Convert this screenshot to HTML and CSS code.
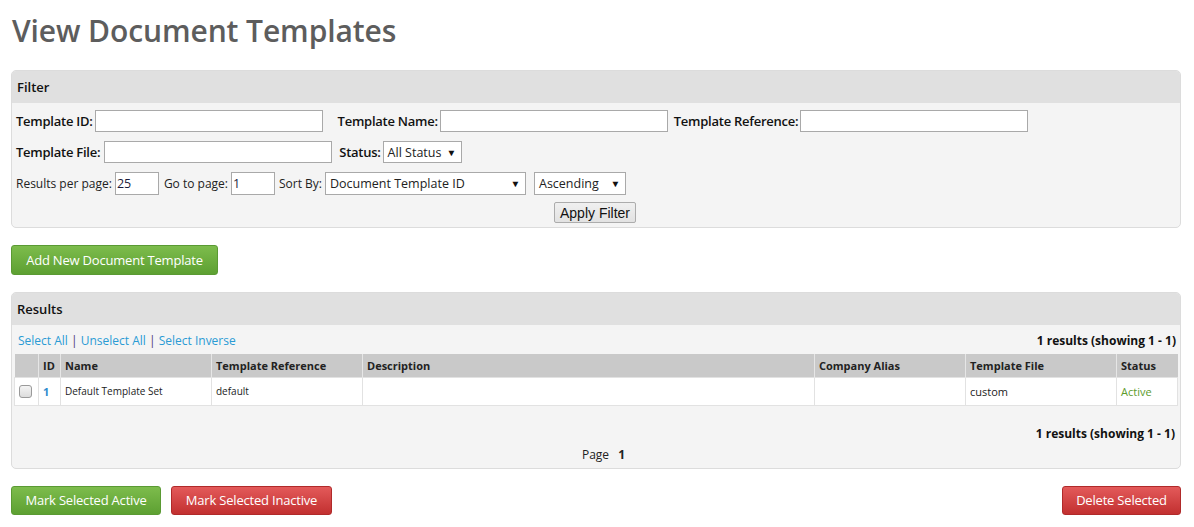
FILE: index.html
```html
<!DOCTYPE html>
<html>
<head>
<meta charset="utf-8">
<title>View Document Templates</title>
<link rel="stylesheet" href="styles.css">
</head>
<body>
<div class="page">
  <h1 class="title">View Document Templates</h1>

  <div class="panel filter">
    <div class="panel-head">Filter</div>
    <div class="panel-body">
      <div class="frow">
        <label class="blabel">Template ID:</label><span class="input w228"></span>
        <label class="blabel gap">Template Name:</label><span class="input w228"></span>
        <label class="blabel gap6">Template Reference:</label><span class="input w228"></span>
      </div>
      <div class="frow">
        <label class="blabel wide">Template File:</label><span class="input w228"></span>
        <label class="blabel gap7">Status:</label><span class="select w79"><span>All Status</span><span class="arrow">▼</span></span>
      </div>
      <div class="frow small">
        <label class="slabel">Results per page:</label><span class="input w44">25</span>
        <label class="slabel gap5">Go to page:</label><span class="input w44">1</span>
        <label class="slabel gap4">Sort By:</label><span class="select w201"><span>Document Template ID</span><span class="arrow">▼</span></span>
        <span class="select w92 gap8"><span>Ascending</span><span class="arrow">▼</span></span>
      </div>
      <div class="btnrow"><button class="apply">Apply Filter</button></div>
    </div>
  </div>

  <button class="btn green add">Add New Document Template</button>

  <div class="panel results">
    <div class="panel-head">Results</div>
    <div class="panel-body">
      <div class="toolbar">
        <div class="links"><a>Select All</a> <span class="sep">|</span> <a>Unselect All</a> <span class="sep">|</span> <a>Select Inverse</a></div>
        <div class="count">1 results (showing 1 - 1)</div>
      </div>
      <table class="grid">
        <colgroup>
          <col style="width:24px"><col style="width:22px"><col style="width:151px"><col style="width:151px"><col style="width:452px"><col style="width:151px"><col style="width:151px"><col style="width:61px">
        </colgroup>
        <thead>
          <tr><th></th><th>ID</th><th>Name</th><th>Template Reference</th><th>Description</th><th>Company Alias</th><th>Template File</th><th>Status</th></tr>
        </thead>
        <tbody>
          <tr>
            <td class="cb"><span class="check"></span></td>
            <td class="id"><a>1</a></td>
            <td class="tiny">Default Template Set</td>
            <td class="tiny">default</td>
            <td></td>
            <td></td>
            <td>custom</td>
            <td class="active">Active</td>
          </tr>
        </tbody>
      </table>
      <div class="count bottom">1 results (showing 1 - 1)</div>
      <div class="pager">Page <b>1</b></div>
    </div>
  </div>

  <div class="actions">
    <div class="left">
      <button class="btn green act w150">Mark Selected Active</button>
      <button class="btn red act w161">Mark Selected Inactive</button>
    </div>
    <button class="btn red act w119">Delete Selected</button>
  </div>
</div>
</body>
</html>
```
FILE: styles.css
```css
* { box-sizing: border-box; }
body {
  margin: 0;
  font-family: "Open Sans", "Liberation Sans", sans-serif;
  color: #222;
  background: #fff;
}
.page {
  width: 1192px;
  padding: 0 11px;
}
.title {
  font-size: 30px;
  font-weight: 600;
  color: #5d5d5d;
  line-height: 40px;
  margin: 11px 0 19px 1px;
  letter-spacing: -0.1px;
}
.panel {
  border: 1px solid #dcdcdc;
  border-radius: 5px;
  background: #f4f4f4;
  width: 1170px;
}
.panel-head {
  background: #e0e0e0;
  height: 32px;
  line-height: 32px;
  padding-left: 5px;
  font-size: 13px;
  font-weight: 600;
  color: #111;
  border-radius: 4px 4px 0 0;
}
.filter .panel-body {
  padding: 7px 4px 4px 4px;
}
.frow {
  display: flex;
  align-items: center;
  height: 22px;
  margin-bottom: 9px;
}
.frow.small {
  height: 23px;
  margin-bottom: 7px;
}
.blabel {
  font-size: 13px;
  font-weight: 600;
  color: #111;
  margin-right: 2px;
  letter-spacing: -0.25px;
}
.blabel.wide { margin-right: 4px; }
.slabel {
  font-size: 12px;
  color: #222;
  margin-right: 3px;
}
.gap { margin-left: 15px; }
.gap6 { margin-left: 6px; }
.gap7 { margin-left: 7px; }
.gap5 { margin-left: 5px; }
.gap4 { margin-left: 4px; }
.gap8 { margin-left: 8px; }
.input {
  display: inline-block;
  height: 22px;
  border: 1px solid #a9a9a9;
  background: #fff;
  font-size: 12.5px;
  line-height: 20px;
  padding-left: 1px;
  color: #1a1a3a;
}
.frow.small .input { height: 23px; line-height: 21px; }
.w228 { width: 228px; }
.w44 { width: 44px; }
.select {
  display: inline-flex;
  align-items: center;
  justify-content: space-between;
  height: 22px;
  border: 1px solid #a9a9a9;
  background: #fff;
  font-size: 12.5px;
  color: #222;
  padding: 0 5px 0 4px;
}
.frow.small .select { height: 23px; }
.select .arrow {
  font-size: 9px;
  color: #111;
  transform: scaleX(1.1);
}
.w79 { width: 79px; }
.w201 { width: 201px; }
.w92 { width: 92px; }
.btnrow {
  display: flex;
  justify-content: center;
}
.apply {
  font-family: "Liberation Sans", Arial, sans-serif;
  font-size: 14px;
  height: 21px;
  width: 82px;
  padding: 0;
  border: 1px solid #acacac;
  border-radius: 2px;
  background: linear-gradient(#f0f0f0, #e2e2e2);
  color: #111;
  margin-left: -2px;
}
.btn {
  font-family: "Open Sans", "Liberation Sans", sans-serif;
  font-size: 13px;
  letter-spacing: -0.2px;
  color: #fff;
  border-radius: 3px;
  padding: 0;
  text-align: center;
  white-space: nowrap;
  cursor: pointer;
}
.green {
  background: linear-gradient(#7dbc4c, #5da032);
  border: 1px solid #5a9a33;
}
.red {
  background: linear-gradient(#e35a5a, #c23030);
  border: 1px solid #b02a2a;
}
.add {
  display: block;
  height: 30px;
  width: 207px;
  margin: 17px 0 17px 0;
}
.results .panel-body {
  padding: 6px 3px 4px 2px;
}
.toolbar {
  display: flex;
  justify-content: space-between;
  align-items: center;
  height: 18px;
  margin-bottom: 5px;
  padding: 0 0 0 4px;
}
.links {
  font-size: 12px;
  color: #2a9bd4;
}
.links a { color: #2a9bd4; }
.links .sep { color: #4a3a7a; }
.count {
  font-size: 12px;
  font-weight: 700;
  color: #111;
  padding-right: 1px;
}
.grid {
  border-collapse: collapse;
  table-layout: fixed;
  width: 1163px;
}
.grid th {
  background: #c9c9c9;
  height: 23px;
  text-align: left;
  font-size: 11px;
  font-weight: 700;
  color: #222;
  padding: 0 4px;
  border-left: 1px solid #e6e6e6;
  white-space: nowrap;
}
.grid th:first-child { border-left: none; }
.grid td {
  background: #fff;
  height: 28px;
  font-size: 11px;
  padding: 0 4px;
  border: 1px solid #e2e2e2;
  color: #222;
  white-space: nowrap;
}
.grid td.tiny { font-size: 10px; }
.grid td.cb { padding: 0 0 0 4px; }
.check {
  display: block;
  width: 13px;
  height: 13px;
  border: 1px solid #9a9a9a;
  border-radius: 3px;
  background: linear-gradient(#f4f4f4, #dcdcdc);
}
.grid td.id a {
  color: #2f8ccd;
  font-weight: 700;
}
.grid td.active { color: #5c9b2c; }
.count.bottom {
  text-align: right;
  margin-top: 19px;
  line-height: 18px;
  padding-right: 2px;
}
.pager {
  text-align: center;
  font-size: 12px;
  line-height: 18px;
  margin-top: 3px;
  padding-left: 16px;
}
.pager b { margin-left: 6px; }
.actions {
  display: flex;
  justify-content: space-between;
  width: 1170px;
  margin-top: 17px;
}
.actions .left {
  display: flex;
  gap: 10px;
}
.act {
  height: 29px;
}
.w150 { width: 150px; }
.w161 { width: 161px; }
.w119 { width: 119px; }
```
